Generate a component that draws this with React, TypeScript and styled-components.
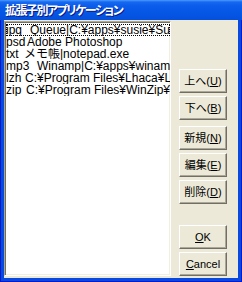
import React from 'react';
import styled, { createGlobalStyle } from 'styled-components';

const GlobalStyle = createGlobalStyle`
  html, body {
    margin: 0;
    padding: 0;
    width: 242px;
    height: 282px;
    overflow: hidden;
    background: #ece9d8;
  }
`;

const UI_FONT = `"Liberation Sans", "Noto Sans CJK JP", sans-serif`;

const Window = styled.div`
  width: 242px;
  height: 282px;
  display: flex;
  flex-direction: column;
  background: #0a3fd8;
  font-family: ${UI_FONT};
`;

const TitleBar = styled.div`
  height: 20px;
  display: flex;
  align-items: center;
  padding-left: 5px;
  background: linear-gradient(to bottom, #4a9bff 0px, #1768f0 2px, #0a5cea 6px, #0655e4 14px, #0450dc 20px);
`;

const Title = styled.span`
  color: #fff;
  font-family: "Noto Sans CJK JP", sans-serif;
  font-size: 12px;
  font-weight: bold;
  font-feature-settings: "palt";
  letter-spacing: -1.5px;
  text-shadow: 1px 1px 0 #0a1a8a;
  line-height: 20px;
`;

const Frame = styled.div`
  flex: 1;
  display: flex;
  padding: 0 4px 4px;
  background: #0849e0;
  box-shadow: inset 1px 0 #0019cf, inset -1px 0 #0019cf, inset 0 -1px #0019cf;
`;

const Client = styled.div`
  flex: 1;
  display: flex;
  align-items: flex-start;
  padding-top: 1px;
  background: #ece9d8;
`;

const ListBox = styled.div`
  width: 167px;
  height: 255px;
  box-sizing: border-box;
  background: #fff;
  border: 1px solid;
  border-color: #aca899 #fff #fff #aca899;
  box-shadow: inset 1px 1px #716f64, inset -1px -1px #f1efe2;
  padding: 2px 0 0 1px;
  overflow: hidden;
`;

const Row = styled.div<{ $focused?: boolean }>`
  height: 12px;
  line-height: 12px;
  font-size: 12px;
  color: #000;
  white-space: pre;
  overflow: hidden;
  box-sizing: border-box;
  outline: ${(p) => (p.$focused ? '1px dotted #000' : 'none')};
  outline-offset: -1px;
`;

const Ext = styled.span<{ $w: number }>`
  display: inline-block;
  width: ${(p) => p.$w}px;
`;

const ButtonColumn = styled.div`
  display: flex;
  flex-direction: column;
  padding-left: 8px;
  padding-top: 48px;
`;

const Button = styled.button<{ $gap?: number }>`
  width: 48px;
  height: 24px;
  margin: ${(p) => p.$gap ?? 3}px 0 0 0;
  padding: 0;
  box-sizing: border-box;
  background: #ece9d8;
  border: 1px solid;
  border-color: #fff #716f64 #716f64 #fff;
  box-shadow: inset -1px -1px #aca899;
  font-family: ${UI_FONT};
  font-size: 11px;
  white-space: nowrap;
  color: #000;
  line-height: 20px;
  text-align: center;
  u {
    text-decoration: underline;
    text-underline-offset: 1px;
  }
`;

const rows = [
  { ext: 'ipg', w: 24, app: 'Queue|C:¥apps¥susie¥Susie.exe' },
  { ext: 'psd', w: 21, app: 'Adobe Photoshop' },
  { ext: 'txt', w: 18, app: 'メモ帳|notepad.exe' },
  { ext: 'mp3', w: 31, app: 'Winamp|C:¥apps¥winamp¥winamp.exe' },
  { ext: 'lzh', w: 19, app: 'C:¥Program Files¥Lhaca¥Lhaca.exe' },
  { ext: 'zip', w: 20, app: 'C:¥Program Files¥WinZip¥WinZip.exe' },
];

export default function App() {
  return (
    <>
      <GlobalStyle />
      <Window>
        <TitleBar>
          <Title>拡張子別アプリケーション</Title>
        </TitleBar>
        <Frame>
          <Client>
            <ListBox>
              {rows.map((r, i) => (
                <Row key={r.ext} $focused={i === 0}>
                  <Ext $w={r.w}>{r.ext}</Ext>
                  {r.app}
                </Row>
              ))}
            </ListBox>
            <ButtonColumn>
              <Button $gap={0}>上へ(<u>U</u>)</Button>
              <Button>下へ(<u>B</u>)</Button>
              <Button $gap={6}>新規(<u>N</u>)</Button>
              <Button>編集(<u>E</u>)</Button>
              <Button>削除(<u>D</u>)</Button>
              <Button $gap={21}><u>O</u>K</Button>
              <Button><u>C</u>ancel</Button>
            </ButtonColumn>
          </Client>
        </Frame>
      </Window>
    </>
  );
}
